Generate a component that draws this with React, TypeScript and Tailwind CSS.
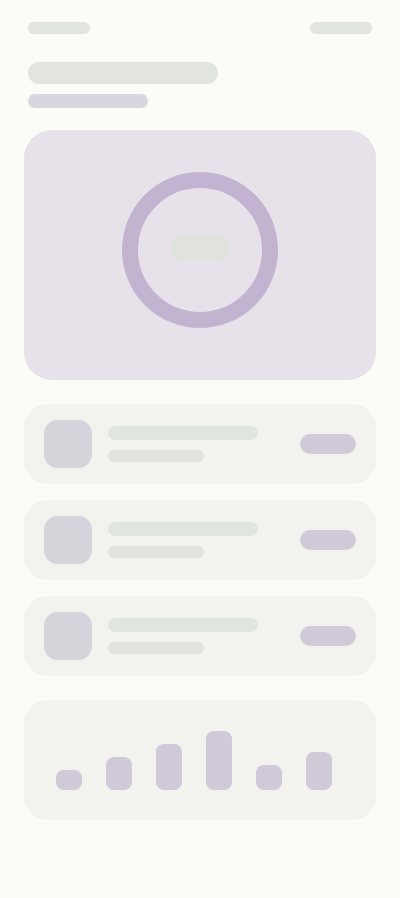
export default function App() {
  const bars = [20, 33, 46, 59, 25, 38];
  const rows = [0, 1, 2];

  return (
    <div className="min-h-[898px] w-full bg-[#fbfcf8] px-6 pt-[22px]" style={{ fontFamily: '"Liberation Sans", sans-serif' }}>
      {/* header */}
      <div className="flex items-center justify-between px-1">
        <div className="h-3 w-[62px] rounded-full bg-[#e2e4df]" />
        <div className="h-3 w-[62px] rounded-full bg-[#e2e4df]" />
      </div>

      <div className="mt-7 px-1">
        <div className="h-[22px] w-[190px] rounded-full bg-[#e2e4df]" />
        <div className="mt-[10px] h-[14px] w-[120px] rounded-full bg-[#d9d7dd]" />
      </div>

      {/* hero */}
      <div className="mt-[22px] flex h-[250px] items-center justify-center rounded-[28px] bg-[#e7e2ea] pb-[10px]">
        <div className="flex h-[156px] w-[156px] items-center justify-center rounded-full border-[16px] border-[#c2b3d1]">
          <div className="mb-[6px] h-6 w-[60px] rounded-full bg-[#e0e2dc]" />
        </div>
      </div>

      {/* list */}
      <div className="mt-6 flex flex-col gap-4">
        {rows.map((r) => (
          <div key={r} className="flex h-20 items-center rounded-[24px] bg-[#f2f3ee] px-5">
            <div className="h-12 w-12 shrink-0 rounded-[14px] bg-[#d6d3da]" />
            <div className="ml-4 flex flex-1 flex-col gap-[10px]">
              <div className="h-[14px] w-[150px] rounded-full bg-[#e2e4df]" />
              <div className="h-3 w-24 rounded-full bg-[#e0e2dd]" />
            </div>
            <div className="h-5 w-14 shrink-0 rounded-full bg-[#d0c9d8]" />
          </div>
        ))}
      </div>

      {/* chart */}
      <div className="mt-6 flex h-[120px] items-end gap-6 rounded-[24px] bg-[#f2f3ee] px-8 pb-[30px]">
        {bars.map((h, i) => (
          <div key={i} className="w-[26px] rounded-lg bg-[#d0cad8]" style={{ height: h }} />
        ))}
      </div>
    </div>
  );
}
